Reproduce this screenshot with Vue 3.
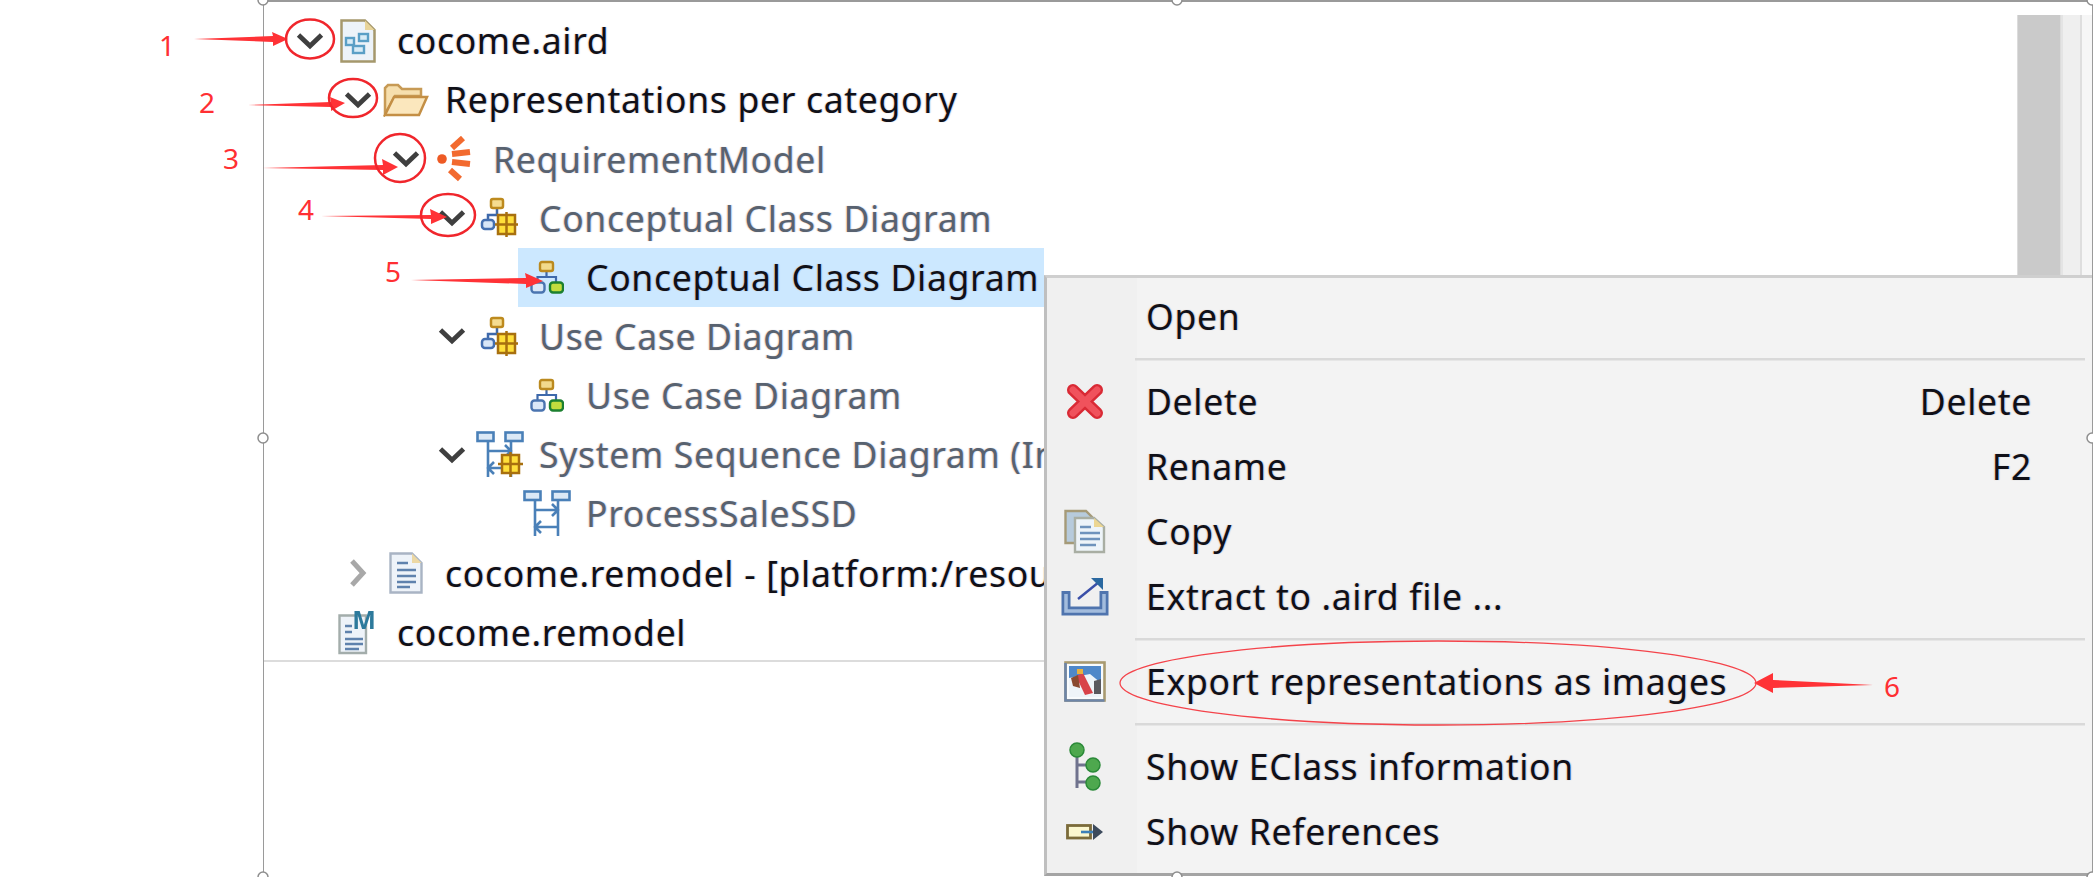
<script setup>
const rows = [
  { text: 'cocome.aird', indent: 22, chevron: 'down', icon: 'aird', tone: 'dark' },
  { text: 'Representations per category', indent: 70, chevron: 'down', icon: 'folder', tone: 'dark' },
  { text: 'RequirementModel', indent: 118, chevron: 'down', icon: 'burst', tone: 'muted' },
  { text: 'Conceptual Class Diagram', indent: 164, chevron: 'down', icon: 'group', tone: 'muted' },
  { text: 'Conceptual Class Diagram', indent: 211, chevron: '', icon: 'diagram', tone: 'dark', selected: true },
  { text: 'Use Case Diagram', indent: 164, chevron: 'down', icon: 'group', tone: 'muted' },
  { text: 'Use Case Diagram', indent: 211, chevron: '', icon: 'diagram', tone: 'muted' },
  { text: 'System Sequence Diagram (In', indent: 164, chevron: 'down', icon: 'seqgroup', tone: 'muted' },
  { text: 'ProcessSaleSSD', indent: 211, chevron: '', icon: 'seq', tone: 'muted' },
  { text: 'cocome.remodel - [platform:/resou', indent: 70, chevron: 'right', icon: 'doc', tone: 'dark' },
  { text: 'cocome.remodel', indent: 22, chevron: '', icon: 'model', tone: 'dark' }
]

const menu = [
  { label: 'Open' },
  { sep: true },
  { label: 'Delete', key: 'Delete', icon: 'delete' },
  { label: 'Rename', key: 'F2' },
  { label: 'Copy', icon: 'copy' },
  { label: 'Extract to .aird file ...', icon: 'extract' },
  { sep: true },
  { label: 'Export representations as images', icon: 'export' },
  { sep: true },
  { label: 'Show EClass information', icon: 'eclass' },
  { label: 'Show References', icon: 'refs' }
]

const arrows = [
  '194,39 273,36 272,32 288,39 273,46 273,42',
  '248,105 331,102 330,97 345,103 331,111 331,107',
  '262,168 383,165 382,159 398,167 383,175 383,170',
  '321,216 431,215 430,209 447,217 431,224 431,219',
  '411,280 526,278 525,273 543,281 526,288 526,284',
  '1873,685 1773,680 1773,673 1754,683 1773,693 1773,688'
]
const rings = [
  { cx: 310, cy: 39, rx: 24, ry: 19.5 },
  { cx: 353, cy: 98, rx: 24, ry: 19 },
  { cx: 400, cy: 158, rx: 25, ry: 24 },
  { cx: 448, cy: 215, rx: 27, ry: 21 }
]
const numbers = [
  { n: 1, x: 167, y: 56 },
  { n: 2, x: 207, y: 113 },
  { n: 3, x: 231, y: 169 },
  { n: 4, x: 306, y: 220 },
  { n: 5, x: 393, y: 282 },
  { n: 6, x: 1892, y: 697 }
]
const handles = [
  [263, 0], [1177, 0], [2092, 0], [263, 438], [2092, 438], [263, 877], [1177, 877], [2092, 877]
]
</script>

<template>
  <div class="page">
    <div class="frame">
      <div class="tree">
        <div v-for="(row, i) in rows" :key="i" class="row" :style="{ paddingLeft: row.indent + 'px' }">
          <span class="twisty">
            <svg v-if="row.chevron === 'down'" width="28" height="18" viewBox="0 0 28 18">
              <polyline class="soft" points="2.500,3 14,14 25.500,3" fill="none" stroke="#3f3f3f" stroke-width="4.800" />
            </svg>
            <svg v-else-if="row.chevron === 'right'" width="18" height="28" viewBox="0 0 18 28">
              <polyline class="soft" points="3,2 14,14 3,26" fill="none" stroke="#a8a8a8" stroke-width="5" />
            </svg>
          </span>
          <div class="body" :class="{ selected: row.selected }">
            <span class="glyph">
              <svg v-if="row.icon === 'aird'" class="soft" width="36" height="44" viewBox="0 0 36 44">
                <path d="M1.500 1.500H25L34.500 11V42.500H1.500Z" fill="#edf3f9" stroke="#a5986c" stroke-width="2.500" />
                <path d="M25 1.500V11H34.500Z" fill="#e8d49a" />
                <g fill="#d8ecf7" stroke="#5a9fc6" stroke-width="2.400">
                  <rect x="6" y="19" width="8" height="7" /><rect x="19" y="15" width="9" height="7" /><rect x="13" y="27" width="11" height="7" />
                </g>
              </svg>
              <svg v-else-if="row.icon === 'folder'" class="soft" width="46" height="34" viewBox="0 0 46 34">
                <path d="M2 31V5L5 2H15L19 6H38V13H12L2 31Z" fill="#f6dfae" stroke="#c79a55" stroke-width="2.500" />
                <path d="M2 32L11 14H44L36 32Z" fill="#fbe7bd" stroke="#c48f45" stroke-width="2.500" />
              </svg>
              <svg v-else-if="row.icon === 'burst'" class="soft" width="36" height="46" viewBox="0 0 36 46">
                <circle cx="6" cy="23" r="4.800" fill="#ee5a24" />
                <g stroke="#f26a2f" stroke-width="6">
                  <line x1="16" y1="12" x2="27" y2="2" /><line x1="16" y1="18" x2="34" y2="16" />
                  <line x1="16" y1="26" x2="34" y2="28" /><line x1="14" y1="34" x2="24" y2="43" />
                </g>
              </svg>
              <svg v-else-if="row.icon === 'group'" class="soft" width="40" height="41" viewBox="0 0 40 41">
                <path d="M17 10V18H8V24" fill="none" stroke="#3e69ab" stroke-width="2.500" />
                <rect x="11" y="2" width="12" height="9" rx="2" fill="#f5dc90" stroke="#bd8a1e" stroke-width="2.500" />
                <rect x="2" y="23" width="12" height="9" rx="3" fill="#d8e6f7" stroke="#446fb0" stroke-width="2.500" />
                <rect x="18" y="18" width="17" height="19" fill="#ffdf3a" stroke="#a8700f" stroke-width="2.500" />
                <path d="M26.500 15V40M15 27.500H38" stroke="#a8700f" stroke-width="2.500" />
              </svg>
              <svg v-else-if="row.icon === 'diagram'" class="soft" width="34" height="35" viewBox="0 0 34 35">
                <path d="M16.500 10V17H7.500V23M16.500 17H26V23" fill="none" stroke="#3e69ab" stroke-width="2.200" />
                <rect x="10" y="2" width="13" height="9" rx="2" fill="#f2da8c" stroke="#bb8a1f" stroke-width="2.400" />
                <rect x="1.500" y="22.500" width="13" height="10" rx="3" fill="#dbe8f8" stroke="#4a74b0" stroke-width="2.400" />
                <rect x="20" y="22.500" width="13" height="10" rx="3" fill="#c2dc3e" stroke="#1c8030" stroke-width="2.400" />
              </svg>
              <svg v-else-if="row.icon === 'seq' || row.icon === 'seqgroup'" class="soft" width="48" height="47" viewBox="0 0 48 47">
                <g fill="#dce9f6" stroke="#4a80b8" stroke-width="2.600">
                  <rect x="1.500" y="1.500" width="16" height="8.500" /><rect x="29.500" y="1.500" width="17" height="8.500" />
                </g>
                <path d="M12 10V46M35 10V46M12 20H35M29 14L35 20L29 26M35 37H12M18 31L12 37L18 43" fill="none" stroke="#4a80b8" stroke-width="2.600" />
                <template v-if="row.icon === 'seqgroup'">
                  <rect x="26" y="24" width="17" height="18" fill="#ffdf3a" stroke="#a8700f" stroke-width="2.500" />
                  <path d="M34.500 21V46M22 33H47" stroke="#a8700f" stroke-width="2.500" />
                </template>
              </svg>
              <svg v-else-if="row.icon === 'doc'" class="soft" width="34" height="42" viewBox="0 0 34 42">
                <path d="M1.500 1.500H23L32.500 11V40.500H1.500Z" fill="#eef3f9" stroke="#a9b4c4" stroke-width="2.400" />
                <path d="M23 1.500V11H32.500Z" fill="#ecd8a4" />
                <path d="M8 11H19M8 18H27M8 24H27M8 30H27M8 35H21" stroke="#5f82ad" stroke-width="2.400" />
              </svg>
              <svg v-else-if="row.icon === 'model'" class="soft icon-open" width="40" height="46" viewBox="0 0 40 46">
                <path d="M1.500 6.500H28V44H1.500Z" fill="#eef3f9" stroke="#a3adab" stroke-width="2.400" />
                <path d="M7 17H14M7 23H14M7 30H25M7 35H25M7 40H21" stroke="#5f82ad" stroke-width="2.400" />
                <text x="26" y="20" text-anchor="middle" class="model-letter">M</text>
              </svg>
            </span>
            <span class="label" :class="row.tone">{{ row.text }}</span>
          </div>
        </div>
      </div>
      <div class="side">
        <div class="thumb"></div>
        <div class="rail"></div>
        <div class="edge"></div>
      </div>

      <div class="menu">
        <template v-for="(item, i) in menu" :key="i">
          <div v-if="item.sep" class="sep"></div>
          <div v-else class="item">
            <span class="item-icon">
              <svg v-if="item.icon === 'delete'" class="soft" width="38" height="37" viewBox="0 0 38 37">
                <path d="M7 7L31 30M31 7L7 30" stroke="#d92a35" stroke-width="12" stroke-linecap="round" />
                <path d="M7 7L31 30M31 7L7 30" stroke="#f0525c" stroke-width="7" stroke-linecap="round" />
              </svg>
              <svg v-else-if="item.icon === 'copy'" class="soft" width="42" height="45" viewBox="0 0 42 45">
                <path d="M1.500 2H22L28 8V34H1.500Z" fill="#b7cbdc" stroke="#a59a78" stroke-width="2.400" />
                <path d="M11 9H30L40 18V43H11Z" fill="#eef4f9" stroke="#a9aea3" stroke-width="2.400" />
                <path d="M30 9V18H40Z" fill="#ecd693" />
                <path d="M16 18H27M16 24H36M16 30H36M16 36H32" stroke="#6f93bc" stroke-width="2.400" />
              </svg>
              <svg v-else-if="item.icon === 'extract'" class="soft" width="48" height="41" viewBox="0 0 48 41">
                <path d="M5 15V35H43V15" fill="none" stroke="#4f74ae" stroke-width="9" />
                <path d="M5 18V35H43V18" fill="none" stroke="#a3bcdd" stroke-width="3.500" />
                <path d="M17 23L38 6" stroke="#3a4fa8" stroke-width="2.400" />
                <path d="M30 2H42V14Z" fill="#2a68a0" />
              </svg>
              <svg v-else-if="item.icon === 'export'" class="soft" width="42" height="41" viewBox="0 0 42 41">
                <rect x="1.500" y="1.500" width="39" height="38" fill="#f8fbfd" stroke="#a89a70" stroke-width="2.600" />
                <path d="M1.500 2V39.500H40.500" fill="none" stroke="#6d85a8" stroke-width="2.600" />
                <rect x="5" y="5" width="32" height="31" fill="#eef4f9" />
                <path d="M5 5H37V22L26 13L5 17Z" fill="#4f88c9" />
                <path d="M30 20L37 18V33H30Z" fill="#59595e" />
                <path d="M12 15L19 12L29 32L21 34Z" fill="#d8434a" />
                <path d="M7 17L14 14L16 27L9 25Z" fill="#8a4a30" />
                <rect x="13" y="8" width="6" height="5" fill="#e8b040" />
              </svg>
              <svg v-else-if="item.icon === 'eclass'" class="soft" width="32" height="49" viewBox="0 0 32 49">
                <path d="M8 10V46M8 23H22M8 40H22" stroke="#70738e" stroke-width="3" fill="none" />
                <circle cx="8" cy="8" r="7" fill="#4ea84e" stroke="#2b8a38" stroke-width="1.500" />
                <circle cx="24" cy="23" r="7" fill="#4ea84e" stroke="#2b8a38" stroke-width="1.500" />
                <circle cx="24" cy="41" r="7" fill="#4ea84e" stroke="#2b8a38" stroke-width="1.500" />
              </svg>
              <svg v-else-if="item.icon === 'refs'" class="soft" width="38" height="18" viewBox="0 0 38 18">
                <rect x="1.500" y="2.500" width="23" height="12.500" fill="#fbf7cf" stroke="#7b6b3a" stroke-width="2.800" />
                <path d="M15 9H29" stroke="#3c7fb8" stroke-width="2.600" />
                <path d="M27 1L37 9L27 17Z" fill="#3c4a5c" />
              </svg>
            </span>
            <span class="item-label">{{ item.label }}</span>
            <span v-if="item.key" class="item-key">{{ item.key }}</span>
          </div>
        </template>
      </div>
    </div>

    <svg class="marks" width="2093" height="877" viewBox="0 0 2093 877">
      <polygon v-for="(p, i) in arrows" :key="'a' + i" :points="p" fill="#ff3236" />
      <ellipse v-for="(r, i) in rings" :key="'r' + i" :cx="r.cx" :cy="r.cy" :rx="r.rx" :ry="r.ry" fill="none" stroke="#f0262c" stroke-width="2.500" />
      <ellipse cx="1438" cy="683" rx="318" ry="42" fill="none" stroke="#f4434a" stroke-width="1.300" />
      <text v-for="t in numbers" :key="'n' + t.n" :x="t.x" :y="t.y" text-anchor="middle" class="num">{{ t.n }}</text>
      <circle v-for="(h, i) in handles" :key="'h' + i" :cx="h[0]" :cy="h[1]" r="5" fill="#fff" stroke="#8e8e8e" stroke-width="1.500" />
    </svg>
  </div>
</template>

<style scoped>
.page {
  position: relative;
  width: 2093px;
  height: 877px;
  overflow: hidden;
  background: #fff;
  font-family: "Noto Sans", "Open Sans", sans-serif;
}
.frame {
  position: relative;
  display: flex;
  box-sizing: border-box;
  width: 1830px;
  height: 877px;
  margin-left: 263px;
  border-top: 2px solid #9a9a9a;
  border-left: 1.500px solid #9a9a9a;
  border-right: 1.500px solid #9a9a9a;
}
.tree {
  box-sizing: border-box;
  flex: none;
  width: 780px;
  height: 660px;
  padding-top: 9px;
  border-bottom: 2px solid #dcdcdc;
}
.row {
  display: flex;
  align-items: center;
  height: 59.150px;
  white-space: nowrap;
}
.twisty {
  flex: none;
  display: flex;
  align-items: center;
  justify-content: center;
  width: 48px;
}
.body {
  flex: 1;
  display: flex;
  align-items: center;
  align-self: stretch;
  min-width: 0;
  margin-left: -5px;
  padding-left: 5px;
}
.body.selected {
  background: #cce8ff;
}
.glyph {
  flex: none;
  display: flex;
  align-items: center;
  justify-content: center;
  width: 48px;
  margin-right: 15px;
}
.glyph svg {
  flex: none;
}
.soft {
  filter: blur(0.5px);
}
.icon-open {
  overflow: visible;
}
.label {
  font-size: 35.500px;
  letter-spacing: 0.7px;
  line-height: 1.2;
  text-shadow: -1px 0 1px rgba(225, 125, 0, 0.3), 1px 0 1px rgba(0, 110, 230, 0.3);
}
.label.dark {
  color: #101018;
}
.label.muted {
  color: #586270;
}
.side {
  flex: 1;
  display: flex;
  justify-content: flex-end;
  height: 274px;
  padding-top: 13px;
  box-sizing: border-box;
}
.thumb {
  box-sizing: border-box;
  width: 44px;
  background: #cacaca;
  border-left: 1px solid #dcdcdc;
  border-right: 1px solid #dcdcdc;
}
.rail {
  box-sizing: border-box;
  width: 21px;
  background: #efefef;
  border-left: 2px solid #e4e4e4;
  border-right: 2px solid #dedede;
}
.edge {
  width: 10px;
  background: #f6f6f6;
}
.menu {
  position: absolute;
  left: 780px;
  right: 0;
  top: 273px;
  bottom: 1px;
  box-sizing: border-box;
  padding-top: 6px;
  background: linear-gradient(to right, #f0f0f0 90px, #f3f3f3 90px);
  border-top: 3px solid #cfcfcf;
  border-left: 3px solid #bfbfbf;
  border-bottom: 3px solid #a4a4a4;
}
.sep {
  height: 20px;
  margin: 0 7px 0 88px;
  background: linear-gradient(#d9d9d9, #d9d9d9) center / 100% 2.500px no-repeat;
}
.item {
  display: flex;
  align-items: center;
  height: 65px;
  padding-right: 60px;
  white-space: nowrap;
}
.item-icon {
  flex: none;
  display: flex;
  align-items: center;
  justify-content: center;
  width: 76px;
  margin-right: 23px;
}
.item-label,
.item-key {
  font-size: 35.500px;
  letter-spacing: 0.7px;
  line-height: 1.2;
  color: #101018;
  text-shadow: -1px 0 1px rgba(225, 125, 0, 0.3), 1px 0 1px rgba(0, 110, 230, 0.3);
}
.item-key {
  margin-left: auto;
}
.marks {
  position: absolute;
  left: 0;
  top: 0;
  pointer-events: none;
}
.num {
  font-family: "Noto Sans", sans-serif;
  font-size: 28px;
  fill: #ff2f33;
}
.model-letter {
  font-family: "Noto Sans", sans-serif;
  font-size: 25px;
  font-weight: 700;
  fill: #2d7a9c;
}
</style>

<style>
html, body {
  margin: 0;
  background: #fff;
}
</style>
